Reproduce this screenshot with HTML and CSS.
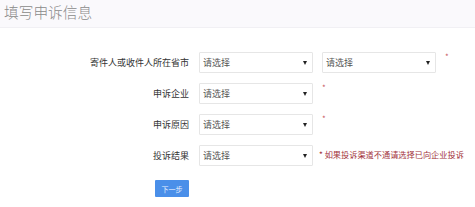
FILE: index.html
```html
<!DOCTYPE html>
<html lang="zh-CN">
<head>
  <meta charset="UTF-8" />
  <title>填写申诉信息</title>
  <link rel="stylesheet" href="styles.css">
</head>
<body>
  <div class="page-head">
    <h1 class="page-title">填写申诉信息</h1>
  </div>

  <form class="appeal-form">
    <div class="form-row">
      <label class="form-label">寄件人或收件人所在省市</label>
      <div class="select-wrap">
        <select class="form-select"><option>请选择</option></select>
      </div>
      <div class="select-wrap">
        <select class="form-select"><option>请选择</option></select>
      </div>
      <span class="required">*</span>
    </div>

    <div class="form-row">
      <label class="form-label">申诉企业</label>
      <div class="select-wrap">
        <select class="form-select"><option>请选择</option></select>
      </div>
      <span class="required">*</span>
    </div>

    <div class="form-row">
      <label class="form-label">申诉原因</label>
      <div class="select-wrap">
        <select class="form-select"><option>请选择</option></select>
      </div>
      <span class="required">*</span>
    </div>

    <div class="form-row">
      <label class="form-label">投诉结果</label>
      <div class="select-wrap">
        <select class="form-select"><option>请选择</option></select>
      </div>
      <span class="hint">* 如果投诉渠道不通请选择已向企业投诉</span>
    </div>

    <div class="form-actions">
      <button type="button" class="next-btn">下一步</button>
    </div>
  </form>
</body>
</html>
```

FILE: styles.css
```css
body {
  margin: 0;
  background-color: #fff;
  font-family: "Noto Sans CJK SC", "Noto Sans", sans-serif;
  color: #333;
}

.page-head {
  height: 27px;
  background-color: #faf9fc;
  border-bottom: 1px solid #f1f0f4;
}

.page-title {
  margin: 0;
  padding: 3px 0 0 4px;
  font-size: 14.7px;
  line-height: 18px;
  font-weight: 300;
  color: #8a8a8a;
}

.appeal-form {
  padding-top: 24px;
}

.form-row {
  display: flex;
  align-items: center;
  height: 21px;
  margin-bottom: 10px;
}

.form-label {
  width: 199px;
  padding-right: 10px;
  box-sizing: border-box;
  text-align: right;
  font-size: 9px;
  color: #333;
}

.select-wrap {
  position: relative;
  margin-right: 9px;
}

.select-wrap::after {
  content: "";
  position: absolute;
  right: 6px;
  top: 9px;
  border-left: 2px solid transparent;
  border-right: 2px solid transparent;
  border-top: 4px solid #222;
  pointer-events: none;
}

.form-select {
  appearance: none;
  -webkit-appearance: none;
  display: block;
  width: 114px;
  height: 21px;
  padding: 0 3px;
  border: 1px solid #e6e6e6;
  border-radius: 1px;
  background-color: #fff;
  font-family: inherit;
  font-size: 9px;
  color: #555;
}

.required {
  align-self: flex-start;
  font-size: 8px;
  line-height: 8px;
  margin-top: 1px;
  color: #c9585e;
}

.hint {
  margin: -3px 0 0 -3px;
  font-size: 8.2px;
  white-space: nowrap;
  color: #a3343c;
}

.form-actions {
  display: flex;
  padding: 4px 0 0 155px;
}

.next-btn {
  width: 34px;
  height: 17px;
  padding: 0;
  border: none;
  border-radius: 1px;
  background-color: #4a8fe9;
  color: #e8f1ff;
  font-family: inherit;
  font-size: 7px;
  cursor: pointer;
}
```
